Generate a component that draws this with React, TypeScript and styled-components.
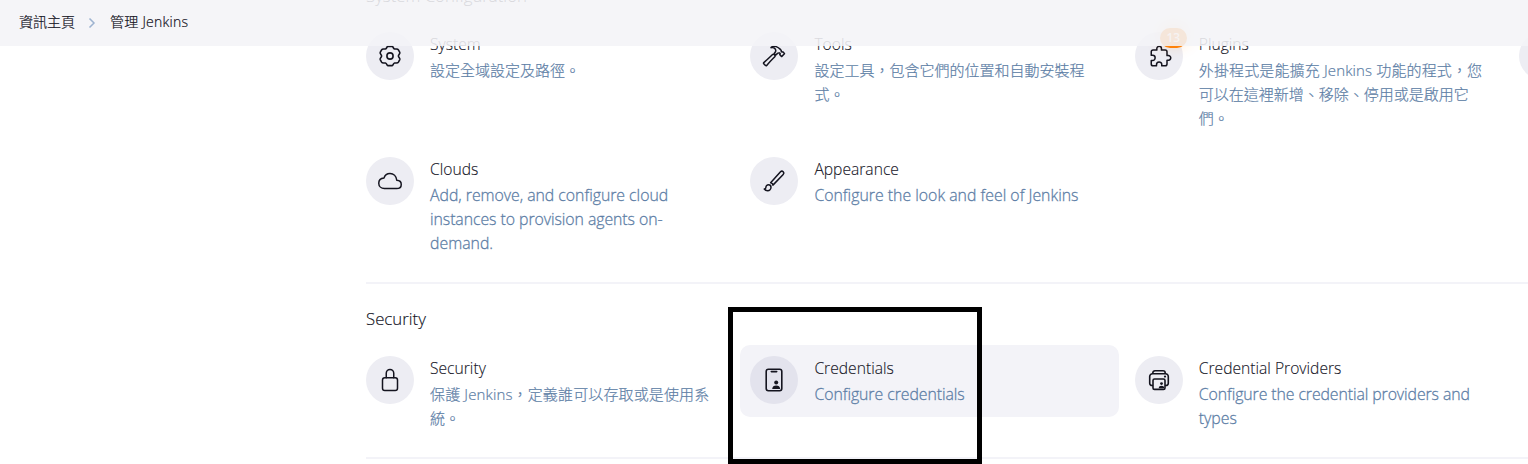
import React from "react";
import styled, { createGlobalStyle } from "styled-components";
import {
  IoHammerOutline,
  IoExtensionPuzzleOutline,
  IoCloudOutline,
  IoBrushOutline,
  IoLockClosedOutline,
} from "react-icons/io5";

const Global = createGlobalStyle`
  * { box-sizing: border-box; }
  body {
    margin: 0;
    background: #fff;
    color: #14141f;
    font-family: "Open Sans", "Noto Sans CJK TC", sans-serif;
    font-weight: 300;
  }
`;

const Page = styled.div`
  position: relative;
  height: 464px;
  overflow: hidden;
`;

const Header = styled.header`
  position: absolute;
  inset: 0 0 auto 0;
  z-index: 2;
  height: 46px;
  padding: 0 19px 4px;
  display: flex;
  align-items: center;
  background: rgba(244, 244, 247, 0.88);
  font-size: 14px;
  -webkit-text-stroke: 0.2px currentColor;
`;

const Crumb = styled.span<{ $spacing?: number }>`
  white-space: nowrap;
  letter-spacing: ${(p) => p.$spacing ?? 0}px;
`;

const Chevron = styled.svg`
  width: 8px;
  height: 12px;
  margin: 4px 14px 0 13px;
  fill: none;
  stroke: #9db3d0;
  stroke-width: 1.5;
`;

const Content = styled.main`
  width: 1513px;
  margin-left: 366px;
`;

const Section = styled.section<{ $top?: number; $inset?: number; $height: number }>`
  margin-top: ${(p) => p.$top ?? 0}px;
  padding-top: ${(p) => p.$inset ?? 0}px;
  height: ${(p) => p.$height}px;
  border-bottom: 2px solid #f3f3f8;
`;

const Heading = styled.h2`
  margin: 0;
  height: 24px;
  font-size: 16.8px;
  line-height: 24px;
  font-weight: 300;
  -webkit-text-stroke: 0.15px currentColor;
`;

const Grid = styled.div<{ $offset: number }>`
  margin-top: ${(p) => p.$offset}px;
  display: grid;
  grid-template-columns: repeat(4, 359px);
  column-gap: 25.4px;
  row-gap: 30px;
`;

const Item = styled.a<{ $active?: boolean }>`
  display: flex;
  gap: 16px;
  margin: -11px -10px -13px;
  padding: 11px 10px 10px;
  min-height: 72px;
  border-radius: 10px;
  align-self: start;
  background: ${(p) => (p.$active ? "#f3f3f8" : "transparent")};
`;

const IconCircle = styled.div<{ $active?: boolean }>`
  position: relative;
  flex: none;
  width: 48px;
  height: 48px;
  border-radius: 50%;
  display: flex;
  align-items: center;
  justify-content: center;
  background: ${(p) => (p.$active ? "#e3e3ed" : "#ededf3")};
  svg {
    width: 24px;
    height: 24px;
  }
`;

const PuzzleIcon = styled(IoExtensionPuzzleOutline)`
  margin-left: 4px;
`;

const Badge = styled.span`
  position: absolute;
  top: -4px;
  right: -4px;
  width: 27px;
  height: 20px;
  border-radius: 10px;
  background: #fe820a;
  box-shadow: 0 -4px 16px rgba(254, 130, 10, 0.3);
  color: #ffe6cf;
  font-size: 12px;
  font-weight: 600;
  line-height: 19px;
  text-align: center;
`;

const Copy = styled.div`
  font-size: 15px;
  line-height: 24px;
`;

const Title = styled.div`
  margin-bottom: 2px;
  height: 24px;
  font-size: 15.65px;
  white-space: nowrap;
  -webkit-text-stroke: 0.12px currentColor;
`;

const Line = styled.div<{ $latin: boolean; $spacing?: number }>`
  height: 24px;
  color: #5d7ea6;
  font-size: ${(p) => (p.$latin ? 15.85 : 15)}px;
  white-space: nowrap;
  letter-spacing: ${(p) => p.$spacing ?? 0}px;
  -webkit-text-stroke: ${(p) => (p.$latin ? 0.28 : 0.2)}px currentColor;
`;

const Highlight = styled.div`
  position: absolute;
  z-index: 3;
  left: 728px;
  top: 307px;
  width: 254px;
  height: 157px;
  border: 5px solid #000;
`;

const GearIcon = () => (
  <svg viewBox="0 0 24 24" fill="none" stroke="currentColor" strokeWidth="1.6" strokeLinejoin="round">
    <path d="M9.8 2.4h4.400C15.200 2.400 15 4.600 16.600 5 18 5.200 19.600 4.400 20.400 5.800l1.400 2.600C22.400 9.600 20.400 10.400 20.400 12s2 2.400 1.400 3.600l-1.400 2.600c-.8 1.400-2.400.6-3.800.8-1.600.4-1.400 2.600-2.400 2.600H9.800c-1 0-.8-2.200-2.400-2.600-1.400-.2-3 .6-3.800-.8l-1.400-2.600C1.600 14.400 3.600 13.600 3.600 12s-2-2.400-1.400-3.600l1.400-2.600C4.400 4.400 6 5.200 7.400 5 9 4.600 8.800 2.400 9.800 2.400z" />
    <circle cx="12" cy="12" r="3.1" />
  </svg>
);

const CredentialsIcon = () => (
  <svg viewBox="0 0 24 24" fill="none" stroke="currentColor" strokeWidth="1.6">
    <rect x="4.2" y="1.3" width="15.600" height="21.4" rx="2.2" />
    <path d="M9.300 3.600h5.400" strokeLinecap="round" />
    <circle cx="14.200" cy="14.500" r="2" fill="currentColor" stroke="none" />
    <path d="M10.200 21c.2-2.400 1.600-3.500 4-3.500s3.800 1.100 4 3.500z" fill="currentColor" stroke="none" />
  </svg>
);

const ProvidersIcon = () => (
  <svg viewBox="0 0 24 24" fill="none" stroke="currentColor" strokeWidth="1.6" strokeLinejoin="round">
    <path d="M6 17.500H5a2.300 2.300 0 0 1-2.300-2.300V8.500A2.800 2.800 0 0 1 5.500 5.700h13a2.800 2.800 0 0 1 2.800 2.800v6.700a2.300 2.300 0 0 1-2.300 2.300h-1" />
    <path d="M5.800 5.500V4.900a2.200 2.200 0 0 1 2.200-2.200h8a2.200 2.200 0 0 1 2.200 2.200v.6" />
    <rect x="6" y="11" width="12" height="10.400" rx="1.500" />
    <circle cx="18" cy="8.600" r="1.100" fill="currentColor" stroke="none" />
    <circle cx="14.500" cy="15.600" r="1.400" fill="currentColor" stroke="none" />
    <path d="M11.700 20.200c.2-1.700 1.200-2.400 2.800-2.400s2.600.7 2.800 2.400z" fill="currentColor" stroke="none" />
  </svg>
);

type Text = [string, number?];

interface EntryProps {
  icon?: React.ReactNode;
  title?: string;
  lines?: Text[];
  active?: boolean;
  badge?: string;
}

const isLatin = (text: string) => /^[\x20-\x7e]+$/.test(text);

const Entry = ({ icon, title, lines = [], active, badge }: EntryProps) => (
  <Item $active={active}>
    <IconCircle $active={active}>
      {icon}
      {badge && <Badge>{badge}</Badge>}
    </IconCircle>
    <Copy>
      <Title>{title}</Title>
      {lines.map(([text, spacing]) => (
        <Line key={text} $latin={isLatin(text)} $spacing={spacing}>
          {text}
        </Line>
      ))}
    </Copy>
  </Item>
);

export default function App() {
  return (
    <Page>
      <Global />
      <Header>
        <Crumb>資訊主頁</Crumb>
        <Chevron viewBox="0 0 8 12">
          <path d="M1.500 1.500 6 6l-4.500 4.500" />
        </Chevron>
        <Crumb $spacing={0.25}>管理 Jenkins</Crumb>
      </Header>
      <Content>
        <Section $top={-16} $height={300}>
          <Heading>System Configuration</Heading>
          <Grid $offset={24}>
            <Entry icon={<GearIcon />} title="System" lines={[["設定全域設定及路徑。"]]} />
            <Entry
              icon={<IoHammerOutline />}
              title="Tools"
              lines={[["設定工具，包含它們的位置和自動安裝程"], ["式。"]]}
            />
            <Entry
              icon={<PuzzleIcon />}
              badge="13"
              title="Plugins"
              lines={[
                ["外掛程式是能擴充 Jenkins 功能的程式，您", 0.14],
                ["可以在這裡新增、移除、停用或是啟用它"],
                ["們。"],
              ]}
            />
            <Entry />
            <Entry
              icon={<IoCloudOutline />}
              title="Clouds"
              lines={[["Add, remove, and configure cloud", -0.03], ["instances to provision agents on-", -0.06], ["demand."]]}
            />
            <Entry
              icon={<IoBrushOutline />}
              title="Appearance"
              lines={[["Configure the look and feel of Jenkins"]]}
            />
          </Grid>
        </Section>
        <Section $inset={23} $height={175}>
          <Heading>Security</Heading>
          <Grid $offset={25}>
            <Entry
              icon={<IoLockClosedOutline />}
              title="Security"
              lines={[["保護 Jenkins，定義誰可以存取或是使用系", 0.14], ["統。"]]}
            />
            <Entry
              active
              icon={<CredentialsIcon />}
              title="Credentials"
              lines={[["Configure credentials", -0.06]]}
            />
            <Entry
              icon={<ProvidersIcon />}
              title="Credential Providers"
              lines={[["Configure the credential providers and", -0.09], ["types"]]}
            />
          </Grid>
        </Section>
      </Content>
      <Highlight />
    </Page>
  );
}
